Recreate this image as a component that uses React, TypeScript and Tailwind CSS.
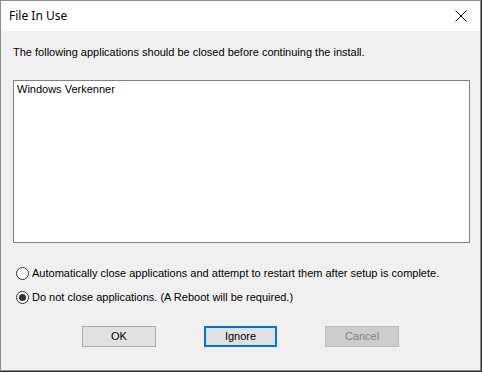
import React, { useState } from 'react';

const font = { fontFamily: '"Liberation Sans", Arial, sans-serif' };

const Radio = ({ checked, label, onClick }: { checked: boolean; label: string; onClick: () => void }) => (
    <div className="flex items-center h-[14px] cursor-default" onClick={onClick}>
        <span className="w-[13px] h-[13px] rounded-full border border-[#333333] bg-white flex items-center justify-center ml-[16px] mr-[3px]">
            {checked && <span className="w-[7px] h-[7px] rounded-full bg-[#333333]" />}
        </span>
        <span className="text-[11px] text-black leading-none">{label}</span>
    </div>
);

const App: React.FC = () => {
    const [choice, setChoice] = useState(1);

    return (
        <div className="w-[482px] h-[372px] bg-[#2e2a25] overflow-hidden" style={font}>
            <div className="w-[481px] h-[371px] border border-[#8c8c8c] bg-[#f0f0f0] flex flex-col">
                {/* title bar */}
                <div className="h-[30px] bg-white flex items-center justify-between shrink-0">
                    <span className="text-[12px] text-black ml-[8px]" style={{ fontFamily: '"Noto Sans", "Liberation Sans", sans-serif' }}>File In Use</span>
                    <svg width="12" height="12" viewBox="0 0 12 12" className="mr-[13px]">
                        <path d="M0.5 0.5 L11.5 11.5 M11.5 0.5 L0.5 11.5" stroke="#000" strokeWidth="1" />
                    </svg>
                </div>

                <div className="text-[11px] text-black ml-[12px] mt-[16px] leading-none">
                    The following applications should be closed before continuing the install.
                </div>

                {/* list */}
                <div className="ml-[12px] mt-[22px] w-[457px] h-[163px] bg-white border border-[#828282]">
                    <div className="text-[11px] text-black pl-[3px] pt-[3px] leading-none">Windows Verkenner</div>
                </div>

                <div className="mt-[23px] flex flex-col gap-[10px] -ml-[1px]">
                    <Radio checked={choice === 0} label="Automatically close applications and attempt to restart them after setup is complete." onClick={() => setChoice(0)} />
                    <Radio checked={choice === 1} label="Do not close applications. (A Reboot will be required.)" onClick={() => setChoice(1)} />
                </div>

                {/* buttons */}
                <div className="flex mt-[22px] ml-[81px] gap-[48px]">
                    <button className="w-[74px] h-[21px] bg-[#e1e1e1] border border-[#adadad] text-[11px] text-black leading-none">OK</button>
                    <button className="w-[73px] h-[21px] bg-[#e1e1e1] border-2 border-[#0078d7] text-[11px] text-black leading-none">Ignore</button>
                    <button disabled className="w-[74px] h-[21px] bg-[#cccccc] border border-[#bfbfbf] text-[11px] text-[#838383] leading-none">Cancel</button>
                </div>
            </div>
        </div>
    );
};

export default App;
